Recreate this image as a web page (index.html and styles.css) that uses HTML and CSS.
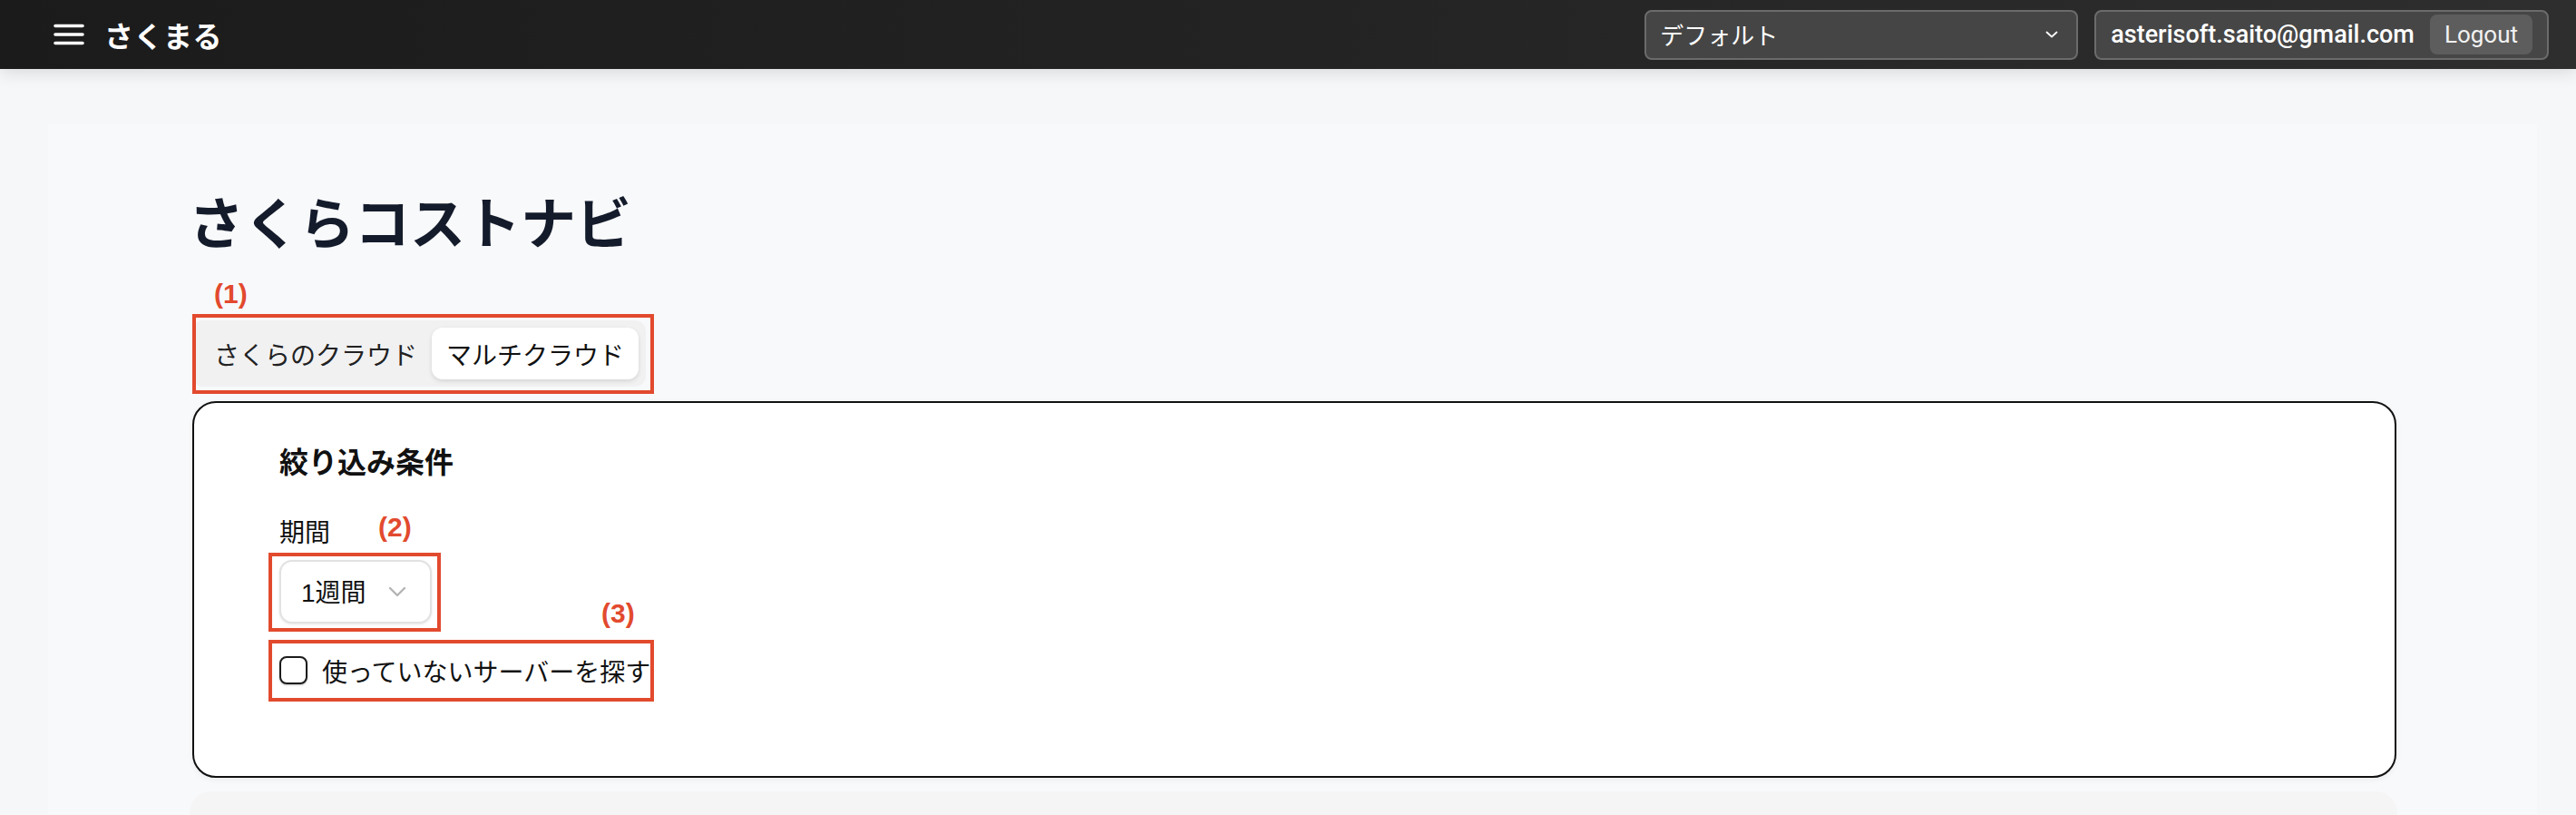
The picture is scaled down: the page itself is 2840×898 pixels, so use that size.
FILE: index.html
```html
<!DOCTYPE html>
<html lang="ja">
<head>
<meta charset="utf-8">
<title>さくらコストナビ</title>
<link rel="stylesheet" href="styles.css">
</head>
<body>
<header class="topbar">
  <div class="brand">
    <svg class="hamburger" width="34" height="24" viewBox="0 0 34 24" aria-hidden="true">
      <path d="M2 2.5H32M2 12H32M2 21.5H32" stroke="#fff" stroke-width="3.6" stroke-linecap="round" fill="none"/>
    </svg>
    <span class="brand-name">さくまる</span>
  </div>
  <div class="actions">
    <div class="org-select">
      <span>デフォルト</span>
      <svg width="14" height="8" viewBox="0 0 14 8" aria-hidden="true">
        <path d="M1.5 1.5L7 6.5L12.5 1.5" stroke="#fff" stroke-width="1.8" fill="none" stroke-linecap="round" stroke-linejoin="round"/>
      </svg>
    </div>
    <div class="account">
      <span class="email">asterisoft.saito@gmail.com</span>
      <button class="logout">Logout</button>
    </div>
  </div>
</header>

<main class="page">
  <div class="container">
    <h1 class="title">さくらコストナビ</h1>
    <div class="note note-1">(1)</div>
    <div class="annot">
      <div class="segmented">
        <button class="tab">さくらのクラウド</button>
        <button class="tab active">マルチクラウド</button>
      </div>
      <span class="frame frame-1"></span>
    </div>

    <section class="card">
      <h2 class="card-title">絞り込み条件</h2>
      <div class="label-row">
        <span class="field-label">期間</span>
        <span class="note note-2">(2)</span>
      </div>
      <div class="annot">
        <div class="period-select">
          <span class="period-value"><span class="num">1</span>週間</span>
          <svg width="20" height="12" viewBox="0 0 20 12" aria-hidden="true">
            <path d="M2 2L10 10L18 2" stroke="#b4b4b4" stroke-width="2.4" fill="none" stroke-linecap="round" stroke-linejoin="round"/>
          </svg>
        </div>
        <span class="frame frame-2"></span>
      </div>
      <div class="annot check-wrap">
        <label class="check-row">
          <span class="checkbox"></span>
          <span class="check-text">使っていないサーバーを探す</span>
        </label>
        <span class="frame frame-3"></span>
        <span class="note note-3">(3)</span>
      </div>
    </section>

    <div class="card-next"></div>
  </div>
</main>
</body>
</html>
```

FILE: styles.css
```css
* { box-sizing: border-box; }

html, body {
  margin: 0;
  padding: 0;
}

body {
  background: #f6f7f9;
  font-family: "Noto Sans CJK JP", "Liberation Sans", sans-serif;
  color: #111;
  overflow: hidden;
}

/* ---------- top bar ---------- */
.topbar {
  position: relative;
  z-index: 2;
  height: 76px;
  display: flex;
  align-items: center;
  justify-content: space-between;
  padding: 0 30px 0 59px;
  background: linear-gradient(to right, #1b1b1b 0%, #232323 50%, #2e2e2e 100%);
  box-shadow: 0 4px 18px rgba(0, 0, 0, 0.12);
}

.brand {
  display: flex;
  align-items: center;
  gap: 22px;
}

.hamburger { display: block; }

.brand-name {
  color: #fff;
  font-size: 32px;
  font-weight: 700;
  line-height: 1;
  letter-spacing: 0.5px;
}

.actions {
  display: flex;
  align-items: center;
  gap: 18px;
}

.org-select {
  width: 478px;
  height: 55px;
  display: flex;
  align-items: center;
  justify-content: space-between;
  padding: 0 20px 0 15px;
  background: #454545;
  border: 2px solid #6b6b6b;
  border-radius: 8px;
  color: #fff;
  font-size: 26px;
  line-height: 1;
}

.account {
  height: 55px;
  display: flex;
  align-items: center;
  gap: 17px;
  padding: 0 16px;
  background: #464646;
  border: 2px solid #6b6b6b;
  border-radius: 8px;
}

.email {
  color: #fff;
  font-family: "Roboto", "Liberation Sans", sans-serif;
  font-weight: 500;
  font-size: 27px;
  line-height: 1;
}

.logout {
  height: 44px;
  padding: 0 16px;
  border: none;
  border-radius: 8px;
  background: #5d5d5d;
  color: #f2f2f2;
  font-family: "Roboto", "Liberation Sans", sans-serif;
  font-size: 26px;
  line-height: 1;
}

/* ---------- page ---------- */
.page {
  padding-top: 60px;
}

.container {
  margin-left: 53px;
  width: 2744px;
  min-height: 900px;
  padding: 77px 155px 0 159px;
  background: #f8f9fb;
}

.title {
  margin: 0 0 36px -4px;
  font-size: 61px;
  line-height: 60px;
  font-weight: 700;
  color: #141b2b;
}

.note {
  font-family: "Liberation Sans", "Noto Sans CJK JP", sans-serif;
  font-weight: 700;
  font-size: 30px;
  line-height: 30px;
  color: #e24a2e;
}

.note-1 {
  margin: 0 0 14px 24px;
}

.annot {
  position: relative;
  width: fit-content;
}

.frame {
  position: absolute;
  border: 4px solid #e24a2e;
  pointer-events: none;
}

.frame-1 { top: -7px; bottom: -8px; left: 0; right: -9px; }
.frame-2 { top: -8px; bottom: -9px; left: -12px; right: -10px; }
.frame-3 { top: -18px; bottom: -19px; left: -12px; right: -4px; }

/* segmented control */
.segmented {
  display: flex;
  padding: 8px;
  background: #f1f1f2;
  border-radius: 12px;
}

.tab {
  height: 57px;
  padding: 0 16px;
  border: none;
  border-radius: 12px;
  background: transparent;
  font-family: "Noto Sans CJK JP", sans-serif;
  font-size: 28px;
  line-height: 1;
  color: #222;
}

.tab.active {
  background: #fff;
  color: #111;
  box-shadow: 0 2px 5px rgba(0, 0, 0, 0.12);
}

/* card */
.card {
  margin-top: 16px;
  width: 2430px;
  padding: 47px 93px 101px 94px;
  background: #fff;
  border: 2px solid #111;
  border-radius: 26px;
  box-shadow: 0 2px 6px rgba(0, 0, 0, 0.06);
}

.card-title {
  margin: 0 0 43px;
  font-size: 32px;
  line-height: 32px;
  font-weight: 700;
  color: #111;
}

.label-row {
  display: flex;
  align-items: flex-end;
  height: 33px;
  margin-bottom: 18px;
}

.field-label {
  font-size: 28px;
  line-height: 28px;
  color: #111;
}

.note-2 {
  margin: 0 0 3px 53px;
}

.period-select {
  width: 168px;
  height: 70px;
  display: flex;
  align-items: center;
  gap: 24px;
  padding-left: 22px;
  background: #fff;
  border: 2px solid #e2e2e2;
  border-radius: 14px;
  box-shadow: 0 1px 3px rgba(0, 0, 0, 0.10);
}

.period-value {
  font-size: 28px;
  line-height: 1;
  color: #111;
}

.period-value .num {
  font-family: "Liberation Sans", sans-serif;
}

.check-wrap {
  margin-top: 36px;
}

.check-row {
  display: flex;
  align-items: center;
  gap: 16px;
}

.checkbox {
  width: 31px;
  height: 31px;
  border: 2.5px solid #1c1c1c;
  border-radius: 8px;
  background: #fff;
  box-shadow: 0 1px 2px rgba(0, 0, 0, 0.25);
}

.check-text {
  font-size: 28px;
  line-height: 28px;
  color: #111;
}

.note-3 {
  position: absolute;
  top: -62px;
  left: 355px;
}

.card-next {
  margin-top: 15px;
  width: 2434px;
  margin-left: -3px;
  height: 200px;
  background: #f5f5f6;
  border-radius: 24px;
}
```
